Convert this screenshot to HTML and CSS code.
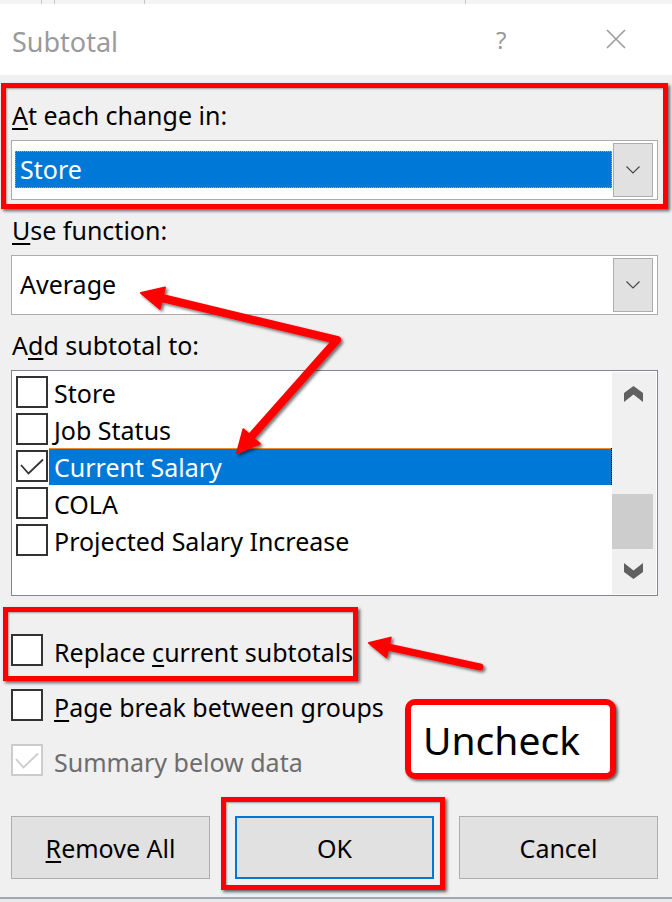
FILE: index.html
```html
<!DOCTYPE html>
<html lang="en">
<head>
<meta charset="utf-8">
<title>Subtotal</title>
<link rel="stylesheet" href="styles.css">
</head>
<body>
<div class="page">
  <div class="sheet-strip">
    <span class="cell c1"></span>
    <span class="cell c2"></span>
    <span class="cell c3"></span>
    <span class="cell c4"></span>
    <span class="cell c5"></span>
  </div>

  <div class="titlebar">
    <span class="title">Subtotal</span>
    <span class="help">?</span>
    <span class="close">
      <svg width="20" height="20" viewBox="0 0 20 20"><path d="M1 1 L19 19 M19 1 L1 19" stroke="#9a9a9a" stroke-width="1.6" fill="none"/></svg>
    </span>
  </div>

  <div class="dialog">
    <div class="label first"><u>A</u>t each change in:</div>
    <div class="combo">
      <div class="combo-value selected">Store</div>
      <div class="combo-btn"><svg width="14" height="8" viewBox="0 0 14 8"><path d="M0.5 0.5 L7 7 L13.5 0.5" stroke="#444" stroke-width="1.1" fill="none"/></svg></div>
    </div>

    <div class="label"><u>U</u>se function:</div>
    <div class="combo">
      <div class="combo-value">Average</div>
      <div class="combo-btn"><svg width="14" height="8" viewBox="0 0 14 8"><path d="M0.5 0.5 L7 7 L13.5 0.5" stroke="#444" stroke-width="1.1" fill="none"/></svg></div>
    </div>

    <div class="label">A<u>d</u>d subtotal to:</div>
    <div class="list">
      <div class="items">
        <div class="row"><span class="cb"></span><span class="txt">Store</span></div>
        <div class="row"><span class="cb"></span><span class="txt">Job Status</span></div>
        <div class="row"><span class="cb checked"><svg width="28" height="28" viewBox="0 0 28 28"><path d="M3 13 L10.5 21.5 L25 7.5" stroke="#333" stroke-width="1.8" fill="none"/></svg></span><span class="txt sel">Current Salary</span></div>
        <div class="row"><span class="cb"></span><span class="txt">COLA</span></div>
        <div class="row"><span class="cb"></span><span class="txt">Projected Salary Increase</span></div>
      </div>
      <div class="scrollbar">
        <div class="sb-btn"><svg width="19" height="16" viewBox="0 0 19 16"><polygon points="0,7 9.5,0 19,7 19,16 9.5,8.5 0,16" fill="#606060"/></svg></div>
        <div class="sb-track"></div>
        <div class="sb-thumb"></div>
        <div class="sb-btn"><svg width="19" height="16" viewBox="0 0 19 16"><polygon points="0,0 9.5,7.5 19,0 19,9 9.5,16 0,9" fill="#606060"/></svg></div>
      </div>
    </div>

    <div class="options">
      <div class="opt"><span class="cb"></span><span class="opt-txt">Replace <u>c</u>urrent subtotals</span></div>
      <div class="opt"><span class="cb"></span><span class="opt-txt"><u>P</u>age break between groups</span></div>
      <div class="opt disabled"><span class="cb"><svg width="28" height="28" viewBox="0 0 28 28"><path d="M3 13 L10.5 21.5 L25 7.5" stroke="#cccccc" stroke-width="1.8" fill="none"/></svg></span><span class="opt-txt">Summary below data</span></div>
    </div>

    <div class="buttons">
      <div class="btn"><span><u>R</u>emove All</span></div>
      <div class="btn ok"><span>OK</span></div>
      <div class="btn"><span>Cancel</span></div>
    </div>
  </div>
  <div class="bottom-edge"></div>

  <div class="mark mark-combo"></div>
  <div class="mark mark-replace"></div>
  <div class="mark mark-ok"></div>
  <div class="callout">Uncheck</div>

  <svg class="arrows" width="672" height="902" viewBox="0 0 672 902">
    <defs>
      <filter id="sh" x="-20%" y="-20%" width="140%" height="140%">
        <feDropShadow dx="2" dy="2" stdDeviation="1.5" flood-color="#000" flood-opacity="0.55"/>
      </filter>
    </defs>
    <g filter="url(#sh)">
      <polyline points="162,298 337,340 251,437" fill="none" stroke="#ff0000" stroke-width="8" stroke-linejoin="round" stroke-linecap="round"/>
      <polygon points="141,293 165,287.4 159.8,308.8" fill="#ff0000" stroke="#ff0000" stroke-width="2" stroke-linejoin="round"/>
      <polygon points="237,453 259.8,443.8 243.4,429.2" fill="#ff0000" stroke="#ff0000" stroke-width="2" stroke-linejoin="round"/>
      <line x1="480" y1="667" x2="388" y2="647" stroke="#ff0000" stroke-width="7" stroke-linecap="round"/>
      <polygon points="369,643 390.7,637.6 386.3,657.2" fill="#ff0000" stroke="#ff0000" stroke-width="2" stroke-linejoin="round"/>
    </g>
  </svg>
</div>
</body>
</html>
```

FILE: styles.css
```css
* { box-sizing: border-box; }

html, body {
  margin: 0;
  padding: 0;
  background: #f0f0f0;
}

body {
  font-family: "Noto Sans", "Open Sans", sans-serif;
  color: #000;
}

.page {
  position: relative;
  width: 672px;
  height: 902px;
  overflow: hidden;
  background: #f0f0f0;
}

u {
  text-decoration: underline;
  text-decoration-thickness: 2px;
  text-underline-offset: 3px;
}

/* spreadsheet peeking above the dialog */
.sheet-strip {
  display: flex;
  height: 4px;
  overflow: hidden;
  background: #f4f4f4;
}
.cell {
  display: block;
  height: 4px;
  border-right: 1px solid #c6c6c6;
}
.c1 { width: 42px; }
.c2 { width: 13px; }
.c3 { width: 90px; }
.c4 { width: 321px; }
.c5 { width: 206px; border-right: none; }

/* title bar */
.titlebar {
  display: flex;
  align-items: flex-start;
  height: 71px;
  padding: 0 46px 0 12px;
  background: #ffffff;
}
.title {
  flex: 1;
  margin-top: 20px;
  font-size: 27px;
  line-height: 36px;
  color: #9a9a9a;
}
.help {
  width: 11px;
  margin-top: 21px;
  margin-right: 99px;
  font-size: 24px;
  line-height: 30px;
  color: #9a9a9a;
}
.close {
  display: block;
  width: 20px;
  height: 20px;
  margin-top: 25px;
}
.close svg { display: block; }

/* dialog body */
.dialog {
  padding: 0 14px 18px 11px;
  background: #f0f0f0;
}
.label {
  height: 30px;
  margin: 15px 0 10px 1px;
  font-size: 25px;
  line-height: 30px;
  white-space: nowrap;
}
.label.first { margin-top: 25px; }

.combo {
  display: flex;
  height: 60px;
  padding: 2px 4px 2px 3px;
  border: 1px solid #acacac;
  background: #ffffff;
}
.combo-value {
  flex: 1;
  margin: 8px 0 9px 0;
  padding-left: 5px;
  font-size: 25px;
  line-height: 37px;
  white-space: nowrap;
}
.combo-value.selected {
  background: #0078d7;
  color: #ffffff;
  outline: 1px dotted #d79a4a;
  outline-offset: -1px;
}
.combo-btn {
  display: flex;
  align-items: center;
  justify-content: center;
  width: 40px;
  margin-left: 1px;
  background: #e1e1e1;
  border: 1px solid #adadad;
}
.combo-btn svg { display: block; }

/* field list */
.list {
  display: flex;
  height: 226px;
  padding: 1px;
  border: 1px solid #82878f;
  background: #ffffff;
}
.items {
  width: 599px;
  padding-top: 2px;
  background: #ffffff;
}
.row {
  display: flex;
  height: 37px;
  padding-left: 3px;
}
.cb {
  display: block;
  flex: none;
  width: 32px;
  height: 32px;
  border: 2px solid #333333;
  background: #ffffff;
}
.cb svg { display: block; }
.row .cb { margin-top: 2px; }
.txt {
  flex: 1;
  margin-left: 1px;
  padding-left: 5px;
  padding-top: 2px;
  font-size: 25px;
  line-height: 35px;
  white-space: nowrap;
}
.txt.sel {
  background: #0078d7;
  color: #ffffff;
  box-shadow: inset 0 1px 0 #f08a2a;
  border-right: 1px dotted #000;
}

.scrollbar {
  display: flex;
  flex-direction: column;
  width: 44px;
  background: #f0f0f0;
}
.sb-btn {
  display: flex;
  align-items: center;
  justify-content: center;
  height: 44px;
  padding-right: 2px;
}
.sb-btn svg { display: block; }
.sb-track { height: 78px; }
.sb-thumb {
  height: 55px;
  margin-right: 3px;
  background: #cdcdcd;
}

/* options */
.options {
  display: flex;
  flex-direction: column;
  gap: 19px;
  margin-top: 38px;
}
.opt {
  display: flex;
  align-items: flex-start;
  height: 36px;
}
.opt .cb { margin-right: 11px; }
.opt-txt {
  font-size: 25px;
  line-height: 36px;
  white-space: nowrap;
}
.opt.disabled .cb { border-color: #cccccc; }
.opt.disabled .opt-txt { color: #6d6d6d; }

/* buttons */
.buttons {
  display: flex;
  gap: 25px;
  margin-top: 36px;
}
.btn {
  display: flex;
  align-items: center;
  justify-content: center;
  width: 199px;
  height: 63px;
  border: 1px solid #adadad;
  background: #e1e1e1;
  font-size: 25px;
  line-height: 34px;
}
.btn.ok { border: 2px solid #0078d7; }

.bottom-edge {
  height: 5px;
  border-top: 2px solid #a3a6b4;
  background: #e9e9ec;
}

/* annotations drawn over the dialog */
.mark {
  position: absolute;
  border: 5px solid #ff0000;
  box-shadow: 2px 2px 3px rgba(0, 0, 0, 0.6), inset 1px 1px 2px rgba(0, 0, 0, 0.35);
}
.mark-combo { left: 1px; top: 83px; width: 667px; height: 126px; }
.mark-replace { left: 3px; top: 607px; width: 355px; height: 74px; }
.mark-ok { left: 221px; top: 797px; width: 224px; height: 93px; }

.callout {
  position: absolute;
  left: 405px;
  top: 699px;
  width: 211px;
  height: 80px;
  padding: 3px 0 0 12px;
  border: 6px solid #ff0000;
  border-radius: 10px;
  background: #ffffff;
  box-shadow: 2px 2px 3px rgba(0, 0, 0, 0.6);
  font-size: 39px;
  line-height: 64px;
  white-space: nowrap;
}

.arrows {
  position: absolute;
  left: 0;
  top: 0;
  pointer-events: none;
}
```
